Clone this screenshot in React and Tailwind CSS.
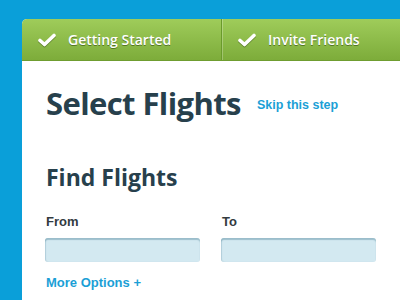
import React from 'react';

const Check = () => (
    <svg width="18" height="14" viewBox="0 0 18 14" className="drop-shadow-[0_1px_0_rgba(60,90,20,0.6)]">
        <path d="M2 7.5 L6.5 11.5 L16 2.5" fill="none" stroke="#fff" strokeWidth="3.6" strokeLinecap="round" strokeLinejoin="round" />
    </svg>
);

const Tab = ({ label, first }) => (
    <div className={`flex items-center gap-3 h-full w-[199px] pl-4 ${first ? '' : 'border-l border-[#6a9a2c] shadow-[inset_1px_0_0_rgba(255,255,255,0.25)]'}`}>
        <Check />
        <span className="text-[14px] font-semibold text-white [text-shadow:0_1px_0_rgba(60,90,20,0.7)]">{label}</span>
    </div>
);

const App = () => {
    return (
        <div className="w-[400px] h-[300px] bg-[#0a9fd9] overflow-hidden pl-[22px] pt-[19px]" style={{ fontFamily: '"Open Sans", "Noto Sans", sans-serif' }}>
            <div className="w-[400px] h-[300px] bg-white rounded-tl-[5px] overflow-hidden">
                {/* Steps bar */}
                <div className="flex h-[42px] bg-gradient-to-b from-[#9fcc5a] to-[#7dac3a] border-b border-[#6f9d30]">
                    <Tab label="Getting Started" first />
                    <Tab label="Invite Friends" />
                </div>

                <div className="pl-[24px]">
                    <div className="flex items-end gap-4 mt-[18px] h-[40px]">
                        <h1 className="text-[31px] leading-none font-bold text-[#27404c] tracking-[-0.6px]">Select Flights</h1>
                        <a className="text-[12.5px] font-bold text-[#1b9fd6] pb-[4px]" style={{ fontFamily: '"Liberation Sans", Arial, sans-serif' }}>Skip this step</a>
                    </div>

                    <h2 className="mt-[47px] text-[23px] leading-none font-bold text-[#27404c]">Find Flights</h2>

                    <div className="flex gap-[22px] mt-[26px]" style={{ fontFamily: '"Liberation Sans", Arial, sans-serif' }}>
                        <div className="flex flex-col">
                            <label className="text-[13px] font-bold text-[#333b3f] leading-none">From</label>
                            <div className="mt-[10px] -ml-px w-[155px] h-[24px] rounded-[3px] bg-[#d3e9f1] shadow-[inset_0_2px_1px_rgba(90,140,160,0.45),inset_1px_0_1px_rgba(90,140,160,0.25)]" />
                        </div>
                        <div className="flex flex-col">
                            <label className="text-[13px] font-bold text-[#333b3f] leading-none">To</label>
                            <div className="mt-[10px] -ml-px w-[155px] h-[24px] rounded-[3px] bg-[#d3e9f1] shadow-[inset_0_2px_1px_rgba(90,140,160,0.45),inset_1px_0_1px_rgba(90,140,160,0.25)]" />
                        </div>
                    </div>

                    <a className="block mt-[11px] text-[13px] font-bold text-[#1b9fd6]" style={{ fontFamily: '"Liberation Sans", Arial, sans-serif' }}>More Options +</a>
                </div>
            </div>
        </div>
    );
};

export default App;
